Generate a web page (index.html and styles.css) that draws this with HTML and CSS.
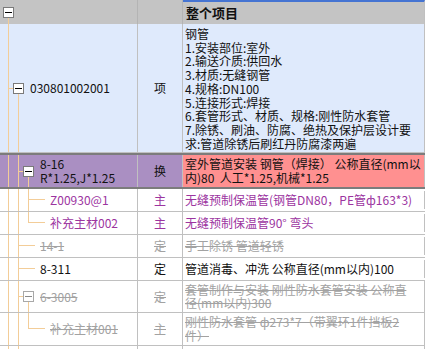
FILE: index.html
```html
<!DOCTYPE html>
<html lang="zh-CN">
<head>
    <meta charset="UTF-8">
    <title>整个项目</title>
    <link rel="stylesheet" href="styles.css">
</head>
<body>

<div class="grid">
    <div class="row head">
        <div class="c1 tree"><span class="bx open"><span class="box"></span></span></div>
        <div class="c2"></div>
        <div class="c3 title">整个项目</div>
    </div>

    <div class="row qd">
        <div class="c1 tree">
            <span class="ts"></span><span class="bx open"><span class="box"></span></span>
            <span class="lbl">030801002001</span>
        </div>
        <div class="c2">项</div>
        <div class="c3">钢管<br>1.安装部位:室外<br>2.输送介质:供回水<br>3.材质:无缝钢管<br>4.规格:DN100<br>5.连接形式:焊接<br>6.套管形式、材质、规格:刚性防水套管<br>7.除锈、刷油、防腐、绝热及保护层设计要<br>求:管道除锈后刷红丹防腐漆两遍</div>
    </div>

    <div class="row sel">
        <div class="c1 tree">
            <span class="g"></span><span class="ts"></span><span class="bx open"><span class="box"></span></span>
            <span class="lbl">8-16<br>R*1.25,J*1.25</span>
        </div>
        <div class="c2">换</div>
        <div class="c3 hot">室外管道安装 钢管（焊接） 公称直径(mm以<br>内)80&nbsp; 人工*1.25,机械*1.25</div>
    </div>

    <div class="row main">
        <div class="c1 tree">
            <span class="g"></span><span class="g"></span><span class="t"></span>
            <span class="lbl leaf">Z00930@1</span>
        </div>
        <div class="c2">主</div>
        <div class="c3">无缝预制保温管(钢管DN80，PE管ф163*3)</div>
    </div>

    <div class="row main">
        <div class="c1 tree">
            <span class="g"></span><span class="g"></span><span class="l"></span>
            <span class="lbl leaf">补充主材002</span>
        </div>
        <div class="c2">主</div>
        <div class="c3">无缝预制保温管90° 弯头</div>
    </div>

    <div class="row off">
        <div class="c1 tree">
            <span class="g"></span><span class="t"></span>
            <span class="lbl leaf">14-1</span>
        </div>
        <div class="c2">定</div>
        <div class="c3">手工除锈 管道轻锈</div>
    </div>

    <div class="row">
        <div class="c1 tree">
            <span class="g"></span><span class="t"></span>
            <span class="lbl leaf">8-311</span>
        </div>
        <div class="c2">定</div>
        <div class="c3">管道消毒、冲洗 公称直径(mm以内)100</div>
    </div>

    <div class="row off">
        <div class="c1 tree">
            <span class="g"></span><span class="ts"></span><span class="bx open"><span class="box"></span></span>
            <span class="lbl">6-3005</span>
        </div>
        <div class="c2">定</div>
        <div class="c3">套管制作与安装 刚性防水套管安装 公称直<br>径(mm以内)300</div>
    </div>

    <div class="row off">
        <div class="c1 tree">
            <span class="g"></span><span class="g"></span><span class="l"></span>
            <span class="lbl leaf">补充主材001</span>
        </div>
        <div class="c2">主</div>
        <div class="c3">刚性防水套管 ф273*7（带翼环1件挡板2<br>件）</div>
    </div>

    <div class="row">
        <div class="c1 tree">
            <span class="g"></span><span class="t"></span>
            <span class="lbl leaf">8-320</span>
        </div>
        <div class="c2">定</div>
        <div class="c3">管道支架制作安装 一般管架 单件重量<br>(kg以内)100</div>
    </div>
</div>

</body>
</html>
```

FILE: styles.css
```css
:root {
    --ln: #f3cd98;
    --grid: #c0c0c0;
}
body {
    margin: 0;
    background: #ffffff;
    font-family: "Noto Sans CJK SC", "Noto Sans", sans-serif;
    font-size: 12px;
    line-height: 13.7px;
    color: #111111;
    overflow: hidden;
}
.grid {
    width: 425px;
}
.row {
    display: grid;
    grid-template-columns: 138px 45px 1fr;
    min-height: 22px;
    border-bottom: 1px solid var(--grid);
}
.c1, .c2, .c3 {
    display: flex;
    align-items: center;
    white-space: nowrap;
    overflow: hidden;
}
.c1 {
    border-right: 1px solid var(--grid);
}
.c2 {
    justify-content: center;
    border-right: 1px solid var(--grid);
}
.c3 {
    display: block;
    align-self: center;
    padding: 2px 2px 2px 2px;
    border-right: 1px solid var(--grid);
}

/* header */
.head {
    height: 24px;
    background: #c4c4c4;
    border-bottom: none;
}
.head .c1, .head .c2 {
    border-right-color: #b4b4b4;
}
.head .c3 {
    align-self: stretch;
    display: flex;
    align-items: center;
    padding: 0 3px;
    border-top: 2px solid #4574d2;
    font-weight: bold;
    font-size: 13px;
}

/* tree column */
.tree {
    align-items: stretch;
    padding-left: 3px;
}
.lbl {
    align-self: center;
    margin-left: 6px;
    padding: 2px 0;
}
.lbl.leaf {
    margin-left: 5px;
}
.g {
    width: 10px;
    flex: none;
    background: linear-gradient(var(--ln), var(--ln)) no-repeat 5px 0 / 1px 100%;
}
.ts {
    width: 10px;
    flex: none;
    background:
        linear-gradient(var(--ln), var(--ln)) no-repeat 5px 0 / 1px 100%,
        linear-gradient(var(--ln), var(--ln)) no-repeat 5px 50% / 5px 1px;
}
.t {
    width: 22px;
    flex: none;
    background:
        linear-gradient(var(--ln), var(--ln)) no-repeat 5px 0 / 1px 100%,
        linear-gradient(var(--ln), var(--ln)) no-repeat 5px 50% / 17px 1px;
}
.l {
    width: 22px;
    flex: none;
    background:
        linear-gradient(var(--ln), var(--ln)) no-repeat 5px 0 / 1px 50%,
        linear-gradient(var(--ln), var(--ln)) no-repeat 5px 50% / 17px 1px;
}
.bx {
    width: 11px;
    flex: none;
    display: flex;
    align-items: center;
}
.bx.open {
    background: linear-gradient(var(--ln), var(--ln)) no-repeat 5px 100% / 1px 50%;
}
.box {
    width: 9px;
    height: 9px;
    border: 1px solid #7a7a7a;
    background: linear-gradient(#000000, #000000) no-repeat center / 7px 1px, #ffffff;
}

/* row states */
.qd {
    background: #dfeafc;
}
.qd .c3 {
    padding-top: 3px;
    padding-bottom: 2px;
}
.sel {
    background: #aa8fc2;
    border-top: 2px solid #7c7c7c;
    border-bottom: 2px solid #7c7c7c;
}
.sel .c3.hot {
    align-self: stretch;
    display: flex;
    align-items: center;
    background: #ff9090;
}
.main .lbl, .main .c2, .main .c3 {
    color: #9c349f;
}
.off .lbl, .off .c2, .off .c3 {
    color: #a2a2a2;
    text-decoration: line-through;
}
.off .box {
    border-color: #a8a8a8;
    background: linear-gradient(#8a8a8a, #8a8a8a) no-repeat center / 7px 1px, #ffffff;
}
```
